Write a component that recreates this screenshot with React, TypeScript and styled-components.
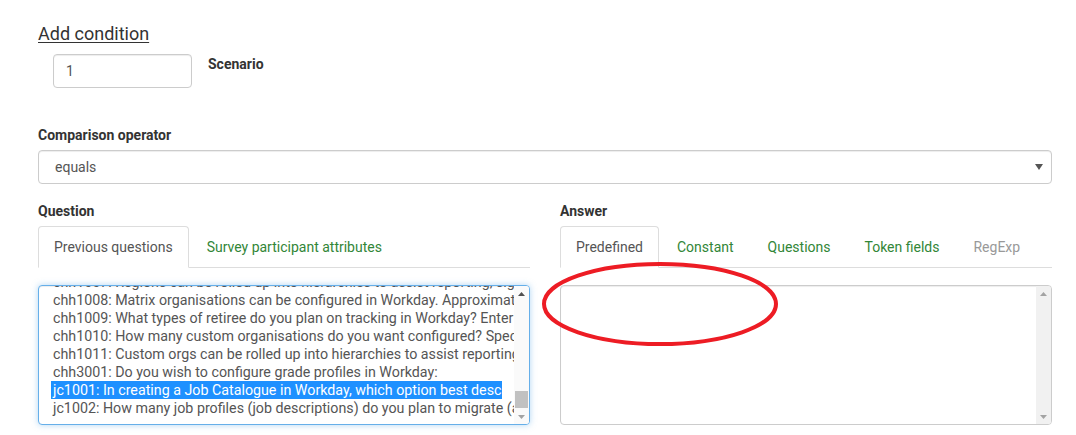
import React, { useEffect, useRef } from 'react';
import styled, { createGlobalStyle, css } from 'styled-components';

const GlobalStyle = createGlobalStyle`
  html, body { margin: 0; padding: 0; background: #fff; }
  body {
    font-family: Roboto, "Liberation Sans", Arial, sans-serif;
    font-size: 14px;
    line-height: 20px;
    color: #333;
  }
  * { box-sizing: border-box; }
`;

const Page = styled.div`
  position: relative;
  width: 1076px;
  height: 435px;
  overflow: hidden;
  padding: 24px 24px 0 38px;
`;

const Title = styled.h4`
  margin: 0;
  font-size: 18px;
  line-height: 20px;
  font-weight: 400;
  color: #333;
  text-decoration: underline;
  text-underline-offset: 2px;
`;

const ScenarioRow = styled.div`
  display: flex;
  align-items: flex-start;
  gap: 16px;
  margin-top: 10px;
  padding-left: 15px;
`;

const TextInput = styled.input`
  width: 139px;
  height: 34px;
  padding: 6px 12px;
  border: 1px solid #ccc;
  border-radius: 4px;
  box-shadow: inset 0 1px 1px rgba(0, 0, 0, 0.075);
  font: inherit;
  color: #555;
  outline: none;
`;

const Label = styled.label`
  display: block;
  font-weight: 700;
  font-size: 14px;
  line-height: 20px;
  color: #333;
  margin-bottom: 5px;
`;

const FieldGroup = styled.div<{ $top: number }>`
  margin-top: ${(p) => p.$top}px;
`;

const SelectBox = styled.div`
  display: flex;
  align-items: center;
  justify-content: space-between;
  height: 34px;
  padding: 6px 8px 6px 16px;
  border: 1px solid #ccc;
  border-radius: 4px;
  box-shadow: inset 0 1px 1px rgba(0, 0, 0, 0.075);
  color: #555;
`;

const Caret = styled.svg`
  display: block;
  flex: none;
`;

const Columns = styled.div`
  display: grid;
  grid-template-columns: 492px 492px;
  column-gap: 30px;
  margin-top: 17px;
`;

const Column = styled.div`
  display: flex;
  flex-direction: column;
`;

const TabList = styled.ul`
  display: flex;
  list-style: none;
  margin: 0 0 17px;
  padding: 0;
  border-bottom: 1px solid #ddd;
`;

const Tab = styled.li<{ $active?: boolean; $muted?: boolean }>`
  margin: 0 2px -1px 0;
  padding: 10px 15px;
  line-height: 20px;
  border: 1px solid transparent;
  border-radius: 4px 4px 0 0;
  color: ${(p) => (p.$muted ? '#999' : '#328637')};
  ${(p) =>
    p.$active &&
    css`
      border-color: #ddd #ddd transparent;
      background: #fff;
      color: #555;
    `}
`;

const BoxFrame = styled.div<{ $focused?: boolean }>`
  display: flex;
  height: 140px;
  overflow: hidden;
  border: 1px solid ${(p) => (p.$focused ? '#66afe9' : '#ccc')};
  border-radius: 4px;
  box-shadow: ${(p) =>
    p.$focused
      ? 'inset 0 1px 1px rgba(0, 0, 0, 0.075), 0 0 6px rgba(102, 175, 233, 0.5)'
      : 'inset 0 1px 1px rgba(0, 0, 0, 0.075)'};
  background: #fff;
`;

const ListViewport = styled.div`
  flex: 1;
  min-width: 0;
  overflow: hidden;
  padding: 6px 12px 7px;
  font-size: 14.25px;
  line-height: 18px;
  color: #555;
`;

const Option = styled.div<{ $selected?: boolean }>`
  padding-left: 2px;
  white-space: nowrap;
  ${(p) =>
    p.$selected &&
    css`
      overflow: hidden;
      background: #1e90ff;
      color: #fff;
    `}
`;

const AnswerText = styled.textarea`
  flex: 1;
  min-width: 0;
  height: 100%;
  resize: none;
  overflow: hidden;
  padding: 6px 12px;
  border: none;
  background: transparent;
  font: inherit;
  color: #555;
  outline: none;
`;

const ScrollBar = styled.div<{ $track: string }>`
  flex: none;
  width: 15px;
  display: flex;
  flex-direction: column;
  background: ${(p) => p.$track};
`;

const ScrollButton = styled.div`
  flex: none;
  height: 15px;
  display: flex;
  align-items: center;
  justify-content: center;
`;

const ScrollTrack = styled.div`
  flex: 1;
  display: flex;
  flex-direction: column;
  padding: 0 1px;
`;

const TrackSpace = styled.div<{ $grow: number }>`
  flex: ${(p) => p.$grow} 1 0;
`;

const Thumb = styled.div`
  flex: none;
  height: 17px;
  background: #c1c1c1;
`;

const Annotation = styled.svg`
  position: absolute;
  left: 0;
  top: 0;
  pointer-events: none;
`;

type ScrollerProps = {
  track: string;
  upColor: string;
  downColor: string;
  position?: number;
};

function Scroller({ track, upColor, downColor, position }: ScrollerProps) {
  return (
    <ScrollBar $track={track}>
      <ScrollButton>
        <svg width="7" height="4" viewBox="0 0 7 4">
          <path d="M0 4 L3.5 0 L7 4 Z" fill={upColor} />
        </svg>
      </ScrollButton>
      <ScrollTrack>
        {position !== undefined && (
          <>
            <TrackSpace $grow={position} />
            <Thumb />
            <TrackSpace $grow={1 - position} />
          </>
        )}
      </ScrollTrack>
      <ScrollButton>
        <svg width="7" height="4" viewBox="0 0 7 4">
          <path d="M0 0 L7 0 L3.5 4 Z" fill={downColor} />
        </svg>
      </ScrollButton>
    </ScrollBar>
  );
}

const questions = [
  'chh1007: Regions can be rolled up into hierarchies to assist reporting, significant regions should be listed.',
  'chh1008: Matrix organisations can be configured in Workday. Approximately how many do you need?',
  "chh1009: What types of retiree do you plan on tracking in Workday? Enter 'N/A' if none.",
  'chh1010: How many custom organisations do you want configured? Specify the types.',
  'chh1011: Custom orgs can be rolled up into hierarchies to assist reporting, list them.',
  'chh3001: Do you wish to configure grade profiles in Workday:',
  'jc1001: In creating a Job Catalogue in Workday, which option best describes your approach?',
  'jc1002: How many job profiles (job descriptions) do you plan to migrate (approx)?',
];

const SELECTED = 'jc1001';

export default function App() {
  const listRef = useRef<HTMLDivElement>(null);

  useEffect(() => {
    const el = listRef.current;
    if (el) el.scrollTop = 19;
  }, []);

  return (
    <>
      <GlobalStyle />
      <Page>
        <Title>Add condition</Title>
        <ScenarioRow>
          <TextInput defaultValue="1" />
          <Label>Scenario</Label>
        </ScenarioRow>

        <FieldGroup $top={37}>
          <Label>Comparison operator</Label>
          <SelectBox>
            <span>equals</span>
            <Caret width="8" height="6" viewBox="0 0 8 6">
              <path d="M0 0 H8 L4 6 Z" fill="#555" />
            </Caret>
          </SelectBox>
        </FieldGroup>

        <Columns>
          <Column>
            <Label>Question</Label>
            <TabList>
              <Tab $active>Previous questions</Tab>
              <Tab>Survey participant attributes</Tab>
            </TabList>
            <BoxFrame $focused>
              <ListViewport ref={listRef}>
                {questions.map((q) => (
                  <Option key={q} $selected={q.startsWith(SELECTED + ':')}>
                    {q}
                  </Option>
                ))}
              </ListViewport>
              <Scroller track="#fafafa" upColor="#505050" downColor="#a3a3a3" position={0.99} />
            </BoxFrame>
          </Column>
          <Column>
            <Label>Answer</Label>
            <TabList>
              <Tab $active>Predefined</Tab>
              <Tab>Constant</Tab>
              <Tab>Questions</Tab>
              <Tab>Token fields</Tab>
              <Tab $muted>RegExp</Tab>
            </TabList>
            <BoxFrame>
              <AnswerText />
              <Scroller track="#f1f1f1" upColor="#a3a3a3" downColor="#a3a3a3" />
            </BoxFrame>
          </Column>
        </Columns>

        <Annotation width="1076" height="435" viewBox="0 0 1076 435">
          <ellipse cx="660" cy="304" rx="116" ry="40" fill="none" stroke="#ed1c24" strokeWidth="4" />
        </Annotation>
      </Page>
    </>
  );
}
